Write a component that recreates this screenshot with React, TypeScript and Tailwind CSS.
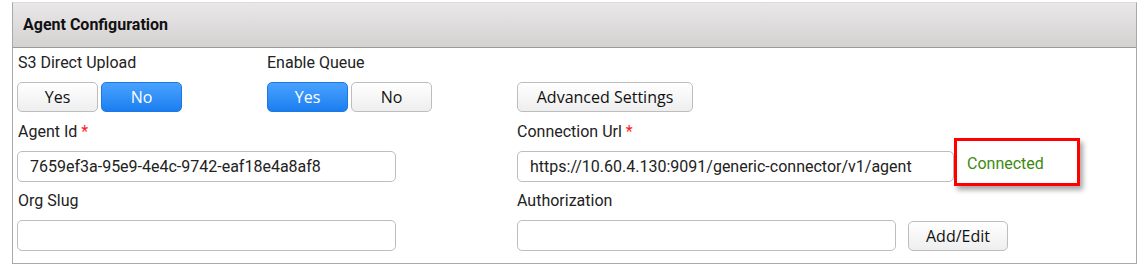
import React from "react";

const labelFont = { fontFamily: "Roboto, 'Liberation Sans', sans-serif" };
const btnFont = { fontFamily: "'Open Sans', 'Liberation Sans', sans-serif" };

function Btn({ children, active, className = "" }: { children: React.ReactNode; active?: boolean; className?: string }) {
  return (
    <button
      style={btnFont}
      className={
        "h-[30px] rounded-[5px] border text-[16px] leading-none flex items-center justify-center " +
        (active
          ? "border-[#1f78e0] bg-gradient-to-b from-[#48a2ff] to-[#1a7ef0] text-white "
          : "border-[#bdbdbd] bg-gradient-to-b from-[#ffffff] to-[#eeeeee] text-[#111] ") +
        className
      }
    >
      {children}
    </button>
  );
}

function Label({ children, req }: { children: React.ReactNode; req?: boolean }) {
  return (
    <div style={labelFont} className="h-[18px] text-[16px] leading-[18px] text-[#222]">
      {children}
      {req && <span className="text-[#ff1a1a]"> *</span>}
    </div>
  );
}

function Input({ value, className = "" }: { value?: string; className?: string }) {
  return (
    <div
      style={labelFont}
      className={
        "h-[31px] rounded-[5px] border border-[#bdbdbd] bg-white px-[12px] flex items-center text-[16px] text-[#222] " +
        className
      }
    >
      {value}
    </div>
  );
}

export default function App() {
  return (
    <div className="w-[1146px] h-[272px] bg-white pt-[2px] pl-[12px]">
      <div className="w-[1125px] h-[262px] border border-[#a9a9a9] border-t-[#dcdcdc]">
        <div
          style={{ fontFamily: "Roboto, 'Liberation Sans', sans-serif" }}
          className="h-[45px] border-b border-[#9a9a9a] bg-gradient-to-b from-[#e9e7e7] to-[#d4d1d1] flex items-center pl-[10px] text-[16px] font-bold text-[#111]"
        >
          Agent Configuration
        </div>
        <div className="pl-[4px] pt-[6px] grid grid-cols-[500px_1fr]">
          {/* left column */}
          <div className="flex flex-col">
            <div className="flex">
              <div className="w-[250px] flex flex-col">
                <div className="pl-[1px]"><Label>S3 Direct Upload</Label></div>
                <div className="mt-[10px] flex gap-[3px]">
                  <Btn className="w-[81px]">Yes</Btn>
                  <Btn className="w-[81px]" active>No</Btn>
                </div>
              </div>
              <div className="w-[250px] flex flex-col">
                <Label>Enable Queue</Label>
                <div className="mt-[10px] flex gap-[3px]">
                  <Btn className="w-[81px]" active>Yes</Btn>
                  <Btn className="w-[81px]">No</Btn>
                </div>
              </div>
            </div>
            <div className="mt-[11px] pl-[1px]"><Label req>Agent Id</Label></div>
            <Input className="mt-[10px] w-[379px]" value="7659ef3a-95e9-4e4c-9742-eaf18e4a8af8" />
            <div className="mt-[10px] pl-[1px]"><Label>Org Slug</Label></div>
            <Input className="mt-[10px] w-[379px]" />
          </div>
          {/* right column */}
          <div className="flex flex-col">
            <div className="h-[18px]" />
            <div className="mt-[10px]">
              <Btn className="w-[176px]">Advanced Settings</Btn>
            </div>
            <div className="mt-[11px]"><Label req>Connection Url</Label></div>
            <div className="mt-[10px] flex items-center relative">
              <Input className="w-[437px]" value="https://10.60.4.130:9091/generic-connector/v1/agent" />
              <div className="absolute left-[437px] top-[-13px] w-[126px] h-[48px] border-[3px] border-[#ff0000] shadow-[3px_4px_5px_rgba(0,0,0,0.35)] bg-white flex items-center pl-[10px]">
                <span style={labelFont} className="text-[16px] text-[#3b8a0e] mt-[4px]">Connected</span>
              </div>
            </div>
            <div className="mt-[10px]"><Label>Authorization</Label></div>
            <div className="mt-[10px] flex items-center gap-[12px]">
              <Input className="w-[379px]" />
              <Btn className="w-[100px] h-[28px]">Add/Edit</Btn>
            </div>
          </div>
        </div>
      </div>
    </div>
  );
}
